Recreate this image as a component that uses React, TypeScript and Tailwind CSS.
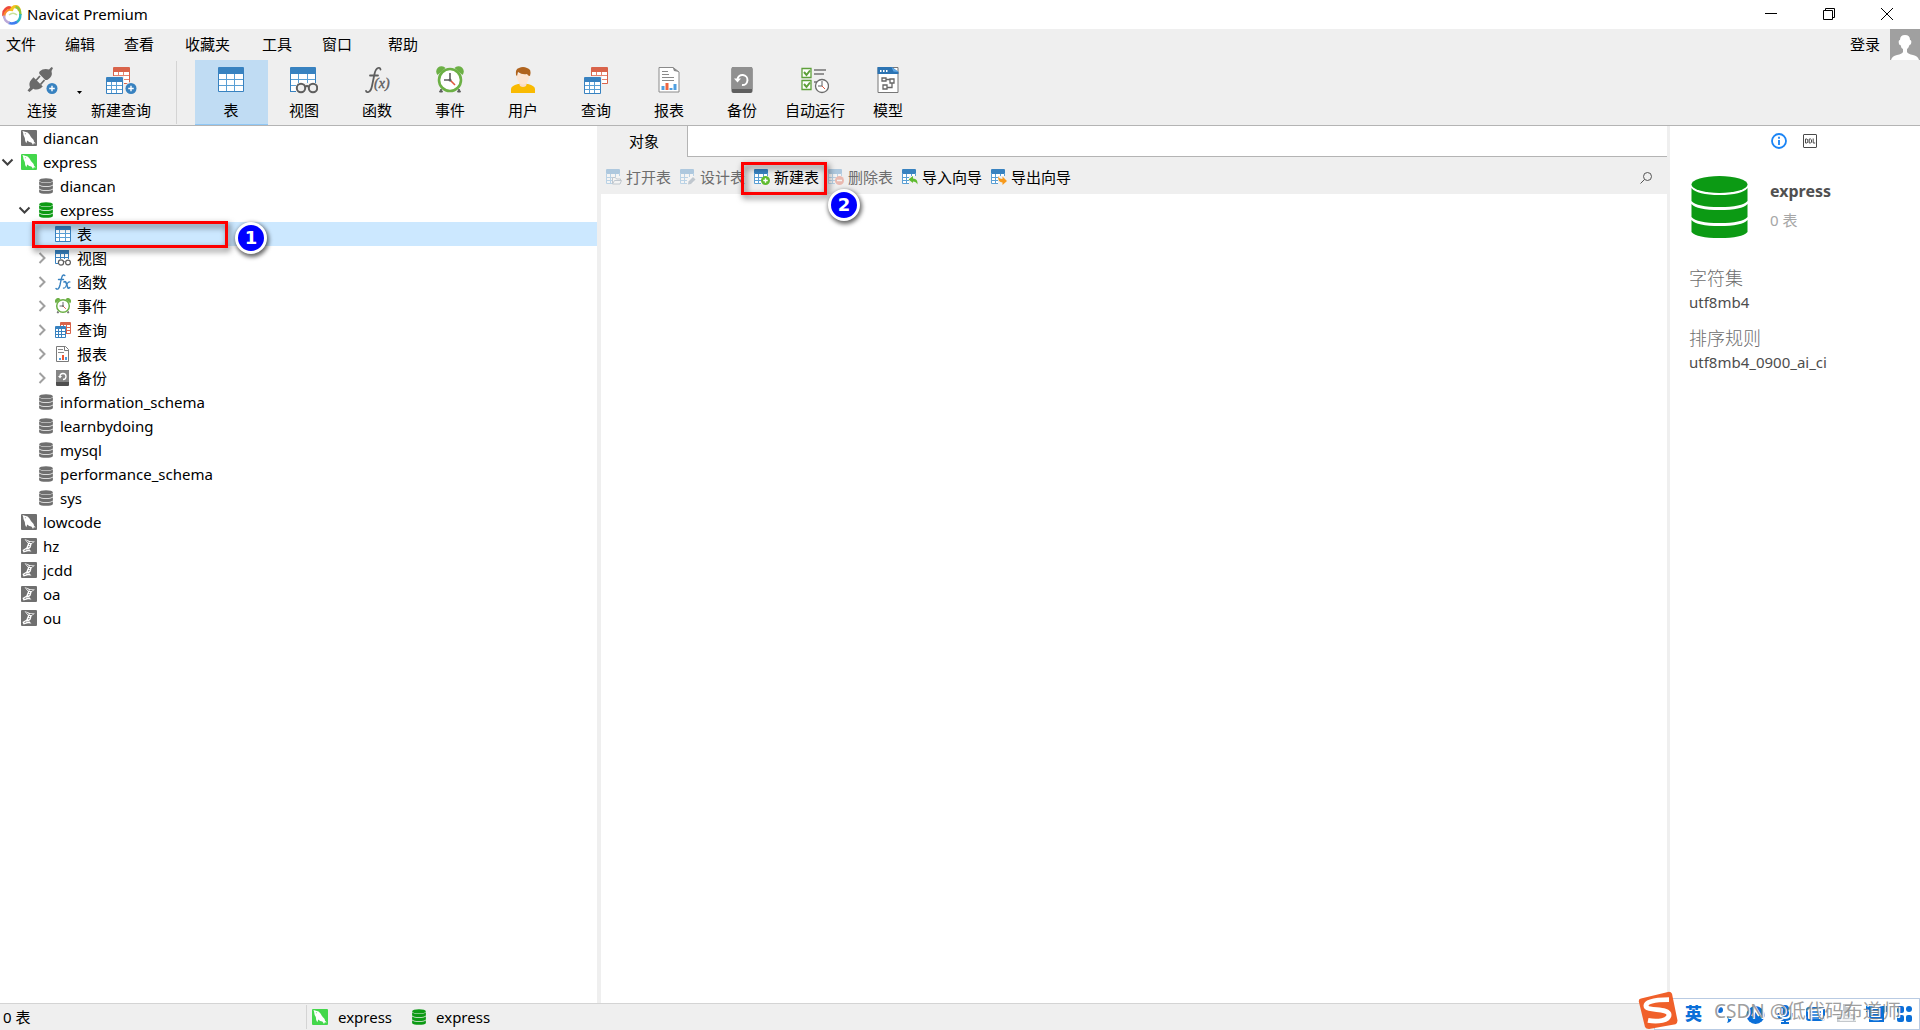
import React from "react";

type IconProps = { className?: string };

const GRAY = "#6f6f6f";

/* ---------- icons: grids ---------- */

function Grid({ x, y, w, h, head, body }: { x: number; y: number; w: number; h: number; head: string; body: string }) {
    const headH = Math.round(h * 0.27);
    const top = y + headH;
    const rows = [1, 2].map((n) => top + Math.round(((h - headH) * n) / 3) - 0.5);
    const cols = [1, 2].map((n) => x + Math.round((w * n) / 3) - 0.5);
    return (
        <g>
            <rect x={x} y={y} width={w} height={h} rx="1" fill={head} />
            <rect x={x + 1} y={top} width={w - 2} height={h - headH - 1} fill="#fff" />
            <path
                d={`M${x + 1} ${rows[0]}h${w - 2}M${x + 1} ${rows[1]}h${w - 2}M${cols[0]} ${top}v${h - headH - 1}M${cols[1]} ${top}v${h - headH - 1}`}
                stroke={body}
                strokeWidth="1"
                fill="none"
            />
        </g>
    );
}

function PlusDot({ cx, cy, r, color }: { cx: number; cy: number; r: number; color: string }) {
    return (
        <g>
            <circle cx={cx} cy={cy} r={r} fill={color} />
            <path d={`M${cx - r * 0.5} ${cy}h${r}M${cx} ${cy - r * 0.5}v${r}`} stroke="#fff" strokeWidth="1.4" />
        </g>
    );
}

function TableIcon({ className }: IconProps) {
    return (
        <svg className={className} viewBox="0 0 28 28" aria-hidden="true">
            <Grid x={1} y={1} w={26} h={25} head="#3882c0" body="#5a9fd4" />
        </svg>
    );
}

function ViewIcon({ className }: IconProps) {
    return (
        <svg className={className} viewBox="0 0 28 28" aria-hidden="true">
            <path d="M0 2a1 1 0 0 1 1-1h24a1 1 0 0 1 1 1v15h-1V8H1v17h5v1H0z" fill="#3882c0" />
            <path d="M1 8h24v9H7v8H1z" fill="#fff" />
            <path d="M1 13.500h24M1 19.500h5M8.500 8v9M17.500 8v9" stroke="#5a9fd4" fill="none" />
            <circle cx="11" cy="22" r="4.200" fill="#efefef" stroke="#5e5e5e" strokeWidth="2" />
            <circle cx="23" cy="22" r="4.200" fill="#efefef" stroke="#5e5e5e" strokeWidth="2" />
            <path d="M15 21q2-2 4 0" stroke="#5e5e5e" strokeWidth="2" fill="none" />
        </svg>
    );
}

function QueryIcon({ className, plus }: IconProps & { plus?: boolean }) {
    return (
        <svg className={className} viewBox={plus ? "0 0 32 28" : "0 0 26 28"} aria-hidden="true">
            <Grid x={8} y={1} w={17} h={17} head="#d9634a" body="#e58570" />
            <rect x="0" y="10" width="19" height="18" fill="#efefef" />
            <Grid x={1} y={11} w={17} h={17} head="#3882c0" body="#5a9fd4" />
            {plus && <circle cx="26" cy="22.500" r="6.500" fill="#efefef" />}
            {plus && <PlusDot cx={26} cy={22.5} r={5.500} color="#3882c0" />}
        </svg>
    );
}

/* ---------- icons: toolbar ---------- */

function PlugIcon({ className }: IconProps) {
    return (
        <svg className={className} viewBox="0 0 32 28" aria-hidden="true">
            <g fill="#6a6a6a">
                <path d="M25.500 1l1.500 1-1.500 3q1.500 5.500-3.500 8.500-2 1-3.200 0L13.500 8q-1-1.200.3-2.800Q17.500 2 23 3.500z" />
                <path d="M5.500 13.500l2-2.300 9.300 9.300-2.500 2q-3.800 2-7 .2L3.500 26 1.500 24.500 4 21.500q-1.800-4.500 1.500-8z" />
            </g>
            <path d="M10 14.500l4-4.500M14.500 18.500l4-4.500" stroke="#6a6a6a" strokeWidth="1.800" />
            <circle cx="26" cy="22.500" r="6.500" fill="#efefef" />
            <PlusDot cx={26} cy={22.5} r={5.500} color="#3882c0" />
        </svg>
    );
}

function FnIcon({ className }: IconProps) {
    return (
        <svg className={className} viewBox="0 0 28 28" overflow="visible" aria-hidden="true">
            <path
                d="M17.500 3.500Q17 1.300 15 2q-2.500 1-3.500 6L9 20q-1 5-3.500 6-2 .7-2.500-1.200M7 9.500h8"
                fill="none"
                stroke="#5e5e5e"
                strokeWidth="1.800"
                strokeLinecap="round"
            />
            <text x="11" y="22" fontFamily="Liberation Serif, serif" fontStyle="italic" fontSize="14" fill="#5e5e5e" stroke="#5e5e5e" strokeWidth="0.4">(x)</text>
        </svg>
    );
}

function SmallFnIcon({ className }: IconProps) {
    return (
        <svg className={className} viewBox="0 0 16 16" aria-hidden="true">
            <g fill="none" stroke="#3882c0" strokeLinecap="round">
                <path d="M9.800 1.500Q8.500.2 7.300 2 6.500 3.500 5 11q-.8 3.500-2 4-1.200.4-2-.5M3.500 5.500h5" strokeWidth="1.400" />
                <path d="M9 8q1.500-1 2.200 1l1.300 4q.6 2 2.300.5" strokeWidth="1.600" />
                <path d="M15 8q-1.500-.8-3 2L10.500 13q-1 1.500-2.200 1" strokeWidth="1.100" />
            </g>
        </svg>
    );
}

function ClockIcon({ className }: IconProps) {
    return (
        <svg className={className} viewBox="0 0 28 28" aria-hidden="true">
            <path d="M1.500 9a5 5 0 0 1 8-7zM26.500 9a5 5 0 0 0-8-7z" fill="#6cb045" />
            <path d="M5 23l-1.500 3h3zM23 23l1.500 3h-3z" fill="#5e5e5e" stroke="#5e5e5e" />
            <circle cx="14" cy="14" r="11" fill="#fff" stroke="#6cb045" strokeWidth="2.600" />
            <path d="M14 7v7H8" stroke="#5e5e5e" strokeWidth="1.600" fill="none" />
            <path d="M14 14l5 5" stroke="#e0563c" strokeWidth="1.600" />
            <circle cx="14" cy="14" r="1.500" fill="#5e5e5e" />
        </svg>
    );
}

function UserIcon({ className }: IconProps) {
    return (
        <svg className={className} viewBox="0 0 26 28" aria-hidden="true">
            <path d="M1 27v-4q0-3 7-5h10q7 2 7 5v4z" fill="#f9ba02" />
            <path d="M9 17h8l-1 3q-3 2-6 0z" fill="#f9dcc4" />
            <path d="M6.500 8h13q0 6-3 9-3.500 3-7 0-3-3-3-9z" fill="#fde5d2" />
            <path d="M6 9Q5 3 9 2q4-2 8 0 5 1 3 8-2 0-3-2-5 1-9-2l-1 4z" fill="#b0641e" />
        </svg>
    );
}

function ReportIcon({ className }: IconProps) {
    return (
        <svg className={className} viewBox="0 0 22 28" aria-hidden="true">
            <path d="M1 1.500h14l6 4.500v20H1z" fill="#fff" stroke="#8a8a8a" />
            <path d="M14.500 1l6.500 5-5-1z" fill="#8a8a8a" />
            <path d="M4 5.500h6M4 8.500h7M4 11.500h12M4 14.500h12" stroke="#8a8a8a" />
            <path d="M3.500 20h3v4h-3zM15.500 18h3v6h-3z" fill="#4f9fe0" />
            <path d="M11.500 22h3v2h-3z" fill="#4f9fe0" />
            <path d="M7.500 17h3v7h-3z" fill="#ee6540" />
        </svg>
    );
}

function BackupIcon({ className }: IconProps) {
    return (
        <svg className={className} viewBox="0 0 22 28" aria-hidden="true">
            <rect x="0.500" y="1" width="21" height="26" rx="2" fill="#5f5f5f" />
            <path d="M2.500 1h17a2 2 0 0 1 2 2v20H.5V3a2 2 0 0 1 2-2z" fill="#909090" />
            <path d="M6.500 13.500a5 5 0 1 1 4.500 5.500" stroke="#fff" strokeWidth="2" fill="none" />
            <path d="M3 12.500h7l-3.500 4z" fill="#fff" />
        </svg>
    );
}

function AutoIcon({ className }: IconProps) {
    return (
        <svg className={className} viewBox="0 0 28 28" aria-hidden="true">
            <path d="M1 2.500h9v9H1zM1 14.500h9v9H1z" fill="#fff" stroke="#5ea03a" strokeWidth="1.300" />
            <path d="M3 6l2.500 3L9 4.500M3 18l2.500 3L9 16.500" stroke="#5ea03a" strokeWidth="2" fill="none" />
            <path d="M13 4h12M13 8h10M13 16h3" stroke="#929292" strokeWidth="2" />
            <circle cx="21" cy="20" r="6.500" fill="#fff" stroke="#6a6a6a" strokeWidth="1.300" />
            <path d="M21 15v5h-4" stroke="#5e5e5e" fill="none" />
            <path d="M21 20l3 3" stroke="#e0563c" />
        </svg>
    );
}

function ModelIcon({ className }: IconProps) {
    return (
        <svg className={className} viewBox="0 0 22 28" aria-hidden="true">
            <path d="M1 1.500h20v25H1z" fill="#fff" stroke="#777" />
            <path d="M.5 1H15l6.500 5v2H.5z" fill="#2c74b3" />
            <path d="M14.500 1l7 5-5-.5z" fill="#5fa8e6" />
            <path d="M3 5h1.500M6 5h1.500M9 5h1.500" stroke="#fff" strokeWidth="2" />
            <path d="M5 12h4v3H5zM13 13h4v4h-4zM6 19h4v4H6zM9 13.500h4M15 17v4.500h-5" fill="none" stroke="#666" strokeWidth="1.300" />
        </svg>
    );
}

/* ---------- icons: tree ---------- */

function SmallTableIcon({ className }: IconProps) {
    return (
        <svg className={className} viewBox="0 0 16 16" aria-hidden="true">
            <Grid x={0} y={0} w={16} h={16} head="#3882c0" body="#5a9fd4" />
        </svg>
    );
}

function SmallViewIcon({ className }: IconProps) {
    return (
        <svg className={className} viewBox="0 0 16 16" aria-hidden="true">
            <path d="M0 0h14v9H3v5H0z" fill="#fff" />
            <path d="M0 0h14v4H0z" fill="#3882c0" />
            <path d="M.5 4v9.500H3M13.500 4v5M5.500 4v5M9.500 4v5M0 7.500h14" stroke="#3882c0" fill="none" />
            <circle cx="6" cy="12.500" r="2.600" fill="#fff" stroke="#5e5e5e" strokeWidth="1.200" />
            <circle cx="13" cy="12.500" r="2.400" fill="#fff" stroke="#5e5e5e" strokeWidth="1.200" />
            <path d="M8.500 12q1-.8 2 0" stroke="#5e5e5e" fill="none" />
        </svg>
    );
}

function SmallQueryIcon({ className }: IconProps) {
    return (
        <svg className={className} viewBox="0 0 16 16" aria-hidden="true">
            <Grid x={5} y={0} w={11} h={12} head="#d9634a" body="#d9634a" />
            <Grid x={0} y={4} w={11} h={12} head="#3882c0" body="#3882c0" />
        </svg>
    );
}

function SmallReportIcon({ className }: IconProps) {
    return (
        <svg className={className} viewBox="0 0 16 16" aria-hidden="true">
            <path d="M1.500.5h9l3 3v12h-12z" fill="#fff" stroke="#7a7a7a" />
            <path d="M9.500 1v3.500h4" fill="none" stroke="#7a7a7a" />
            <path d="M3 3.500h5M3 6.500h6" stroke="#8a8a8a" />
            <path d="M4 12h2v2H4zM10 11h2v3h-2z" fill="#4f9fe0" />
            <path d="M7 9h2v5H7z" fill="#ee5530" />
        </svg>
    );
}

function SmallBackupIcon({ className }: IconProps) {
    return (
        <svg className={className} viewBox="0 0 16 16" aria-hidden="true">
            <rect x="1" y="0" width="13" height="16" rx="1" fill="#4f4f4f" />
            <path d="M2 0h11a1 1 0 0 1 1 1v11H1V1a1 1 0 0 1 1-1z" fill="#858585" />
            <path d="M5 6.500a3 3 0 1 1 3 3" stroke="#fff" strokeWidth="1.300" fill="none" />
            <path d="M3 6h4L5 8.500z" fill="#fff" />
        </svg>
    );
}

function Dolphin({ className, color = GRAY }: IconProps & { color?: string }) {
    return (
        <svg className={className} viewBox="0 0 16 16" aria-hidden="true">
            <rect width="16" height="16" rx="1" fill={color} />
            <path
                d="M1.500 1L4 1.700Q7 1.800 8.500 4.500q1.500 3 3 4.300 1.500 1.200 1.500 3l1.800 1.700-2-.2-.8 1.700Q11.500 13.500 10.300 12.500 8 12.300 6.300 10.500l-1 2.700Q3.800 11 3.800 8 2 5 2.200 3z"
                fill="#fff"
            />
            <circle cx="4.300" cy="3.700" r="0.500" fill={color} />
        </svg>
    );
}

function SqlServer({ className }: IconProps) {
    return (
        <svg className={className} viewBox="0 0 16 16" aria-hidden="true">
            <rect width="16" height="16" rx="1" fill={GRAY} />
            <path d="M3.500 1.200l3 .8 2.500 1.200 5 .3-3.300 2.300-1 3.700L8 11l2.500 2.500L7 13.200 2.500 14.500 1.500 12l3.800-2.200L7 5.500z" fill="#fff" />
            <path d="M5.500 2.500L8 4.500M8.500 4.500h3M8 7l1-.8M7 9l1.500-.5M3.500 12.500l2-.8M6.500 11l1 1" stroke={GRAY} fill="none" />
        </svg>
    );
}

function Database({ className, color = GRAY }: IconProps & { color?: string }) {
    return (
        <svg className={className} viewBox="0 0 58 64" preserveAspectRatio="none" aria-hidden="true">
            <g fill={color}>
                <ellipse cx="29" cy="9.500" rx="28.500" ry="8.500" />
                <path d="M.5 13Q6 20 29 20t28.500-7v13Q52 32 29 32T.5 26z" />
                <path d="M.5 29Q6 35 29 35t28.500-6v13Q52 48 29 48T.5 42z" />
                <path d="M.5 45Q6 51 29 51t28.500-6v12Q52 63 29 63T.5 57z" />
            </g>
        </svg>
    );
}

function Chevron({ open }: { open: boolean }) {
    return open ? (
        <svg className="size-4" viewBox="0 0 16 16" aria-hidden="true">
            <path d="M2.500 5.500l5 5 5-5" fill="none" stroke="#404040" strokeWidth="2" />
        </svg>
    ) : (
        <svg className="size-4" viewBox="0 0 16 16" aria-hidden="true">
            <path d="M5.500 3l5 5-5 5" fill="none" stroke="#a0a0a0" strokeWidth="2" />
        </svg>
    );
}

/* ---------- icons: object toolbar ---------- */

function ObjectIcon({ kind }: { kind: string }) {
    return (
        <svg className="size-4 shrink-0" viewBox="0 0 16 16" aria-hidden="true">
            <rect width="14" height="14" rx="1" y="0.500" fill="#fff" />
            <path d="M0 1a1 1 0 0 1 1-1h12a1 1 0 0 1 1 1v4H0z" fill="#3882c0" />
            <path d="M.5 4v10.500H7M13.500 4v3M4.500 5v9.500M9.500 5v3M0 8.500h8M0 11.500h7" stroke="#5a9fd4" fill="none" />
            {kind === "open" && <path d="M6.500 15V8.500h3l1 1.500h4v1.500M6.500 15l2-3.500h7L14 15z" fill="#fff" stroke="#6a7f92" />}
            {kind === "design" && <path d="M8 15.500l.5-3L13 8l2.500 2.500L11 15z" fill="#6a7f92" />}
            {kind === "new" && <PlusDot cx={11.5} cy={11.5} r={4.500} color="#5fbb2f" />}
            {kind === "delete" && (
                <>
                    <circle cx="11.500" cy="11.500" r="4.500" fill="#e0563c" />
                    <path d="M9 11.500h5" stroke="#fff" strokeWidth="1.500" />
                </>
            )}
            {kind === "import" && (
                <>
                    <path d="M7 7h9v9H7z" fill="#efefef" />
                    <path d="M6.500 10.500L11 7v2.500q5 0 4.500 6-1.500-3-4.500-3V14z" fill="#5fbb2f" />
                </>
            )}
            {kind === "export" && (
                <>
                    <path d="M7 7h9v9H7z" fill="#efefef" />
                    <path d="M7 7q1 3 4.500 3V7.500L16 12l-4.500 4v-2.500Q7 13.500 7 7z" fill="#f79a1c" />
                </>
            )}
        </svg>
    );
}

/* ---------- data ---------- */

const menus = ["文件", "编辑", "查看", "收藏夹", "工具", "窗口", "帮助"];

const tools = [
    { label: "表", icon: <TableIcon className="size-7" />, active: true },
    { label: "视图", icon: <ViewIcon className="size-7" /> },
    { label: "函数", icon: <FnIcon className="size-7" /> },
    { label: "事件", icon: <ClockIcon className="size-7" /> },
    { label: "用户", icon: <UserIcon className="h-7 w-[26px]" /> },
    { label: "查询", icon: <QueryIcon className="h-7 w-[26px]" /> },
    { label: "报表", icon: <ReportIcon className="h-7 w-[22px]" /> },
    { label: "备份", icon: <BackupIcon className="h-7 w-[22px]" /> },
    { label: "自动运行", icon: <AutoIcon className="size-7" /> },
    { label: "模型", icon: <ModelIcon className="h-7 w-[22px]" /> },
];

interface TreeNode {
    label: string;
    level: 0 | 1 | 2;
    icon: React.ReactNode;
    open?: boolean;
    selected?: boolean;
}

const db = <Database className="h-4 w-3.5" />;

const tree: TreeNode[] = [
    { label: "diancan", level: 0, icon: <Dolphin className="size-4" /> },
    { label: "express", level: 0, icon: <Dolphin className="size-4" color="#43d74b" />, open: true },
    { label: "diancan", level: 1, icon: db },
    { label: "express", level: 1, icon: <Database className="h-4 w-3.5" color="#0c9a14" />, open: true },
    { label: "表", level: 2, icon: <SmallTableIcon className="size-4" />, selected: true },
    { label: "视图", level: 2, icon: <SmallViewIcon className="size-4" />, open: false },
    { label: "函数", level: 2, icon: <SmallFnIcon className="size-4" />, open: false },
    { label: "事件", level: 2, icon: <ClockIcon className="size-4" />, open: false },
    { label: "查询", level: 2, icon: <SmallQueryIcon className="size-4" />, open: false },
    { label: "报表", level: 2, icon: <SmallReportIcon className="size-4" />, open: false },
    { label: "备份", level: 2, icon: <SmallBackupIcon className="size-4" />, open: false },
    { label: "information_schema", level: 1, icon: db },
    { label: "learnbydoing", level: 1, icon: db },
    { label: "mysql", level: 1, icon: db },
    { label: "performance_schema", level: 1, icon: db },
    { label: "sys", level: 1, icon: db },
    { label: "lowcode", level: 0, icon: <Dolphin className="size-4" /> },
    { label: "hz", level: 0, icon: <SqlServer className="size-4" /> },
    { label: "jcdd", level: 0, icon: <SqlServer className="size-4" /> },
    { label: "oa", level: 0, icon: <SqlServer className="size-4" /> },
    { label: "ou", level: 0, icon: <SqlServer className="size-4" /> },
];

const indent = ["pl-0", "pl-[17px]", "pl-[34px]"];

const objectActions = [
    { label: "打开表", kind: "open", disabled: true },
    { label: "设计表", kind: "design", disabled: true },
    { label: "新建表", kind: "new" },
    { label: "删除表", kind: "delete", disabled: true },
    { label: "导入向导", kind: "import" },
    { label: "导出向导", kind: "export" },
];

/* ---------- pieces ---------- */

function Frame({ className }: { className: string }) {
    return (
        <span
            className={`pointer-events-none absolute z-10 border-3 border-[#fe0000] drop-shadow-[2px_3px_3px_rgba(0,0,0,0.6)] ${className}`}
        />
    );
}

function StepBadge({ n, className }: { n: number; className: string }) {
    return (
        <span
            className={`pointer-events-none absolute z-20 flex size-8 items-center justify-center rounded-full border-3 border-white bg-[#0000fe] font-['DejaVu_Sans',sans-serif] text-lg font-bold text-white shadow-[1px_2px_4px_1px_rgba(0,0,0,0.6)] ${className}`}
        >
            {n}
        </span>
    );
}

function TitleBar() {
    return (
        <header className="flex h-[29px] items-center bg-white pr-1 pl-0.5">
            <svg className="size-5" viewBox="0 0 20 20" fill="none" strokeWidth="3" aria-hidden="true">
                <path d="M1.800 11Q1 6.500 4 4q3-3 6 0" stroke="#ee4a3a" />
                <path d="M2 13q0-6 4.500-8 3-1 4.500.5" stroke="#f98b2b" strokeWidth="2" />
                <path d="M9 6q1-4.500 5-4.500 3 .5 3.500 4.500" stroke="#f4c21c" />
                <path d="M13.500 2q5 1 5 8" stroke="#8cc63e" strokeWidth="2.400" />
                <path d="M18.300 9q.5 6-4.300 8.500" stroke="#2fb5c0" strokeWidth="2.400" />
                <path d="M15 17q-4.500 2.500-8.500.8" stroke="#3f7df0" strokeWidth="2.600" />
                <path d="M7.500 18Q2 16 2 10.500" stroke="#b9a8d8" strokeWidth="2.400" />
                <path d="M7 10q4-3.500 8 0" stroke="#c9e29a" strokeWidth="1.500" />
            </svg>
            <h1 className="ml-[5px] pb-px text-[15px] leading-5">Navicat Premium</h1>
            <div className="ml-auto flex pb-0.5">
                <button className="flex h-[27px] w-[58px] items-center justify-center" aria-label="最小化">
                    <svg className="size-3" viewBox="0 0 12 12"><path d="M0 5.500h12" stroke="#000" /></svg>
                </button>
                <button className="flex h-[27px] w-[58px] items-center justify-center" aria-label="还原">
                    <svg className="size-3" viewBox="0 0 12 12"><path d="M.5 2.500h9v9h-9zM2.500 2.500v-2h9v9h-2" stroke="#000" fill="none" /></svg>
                </button>
                <button className="flex h-[27px] w-[58px] items-center justify-center" aria-label="关闭">
                    <svg className="size-3" viewBox="0 0 12 12"><path d="M0 0l12 12M12 0L0 12" stroke="#000" /></svg>
                </button>
            </div>
        </header>
    );
}

function MenuBar() {
    return (
        <div className="flex h-[31px] items-center">
            <nav className="grid grid-cols-[59px_59px_61px_77px_60px_66px_60px] pb-0.5 pl-1.5">
                {menus.map((m) => (
                    <button key={m} className="text-left leading-5">{m}</button>
                ))}
            </nav>
            <button className="mr-2.5 ml-auto pb-0.5 leading-5">登录</button>
            <svg className="h-[31px] w-[30px]" viewBox="0 0 30 31" aria-hidden="true">
                <rect width="30" height="31" fill="#a0a0a0" />
                <path d="M10 11q0-5 5-5t5 5q2 0 1 4-1 1-1.500 1-1 3-2.500 4v3q1 2 6 3 5 1 6 5H1q1-4 6-5 5-1 6-3v-3q-2-1-2.500-4Q9 16 9 15q-1-4 1-4z" fill="#fff" />
            </svg>
        </div>
    );
}

function ToolBar() {
    return (
        <div className="flex h-[65px]">
            <button className="flex w-[73px] flex-col items-center gap-1.5 pt-1.5 pl-[11px]">
                <PlugIcon className="h-7 w-8" />
                <span className="leading-5">连接</span>
            </button>
            <button className="flex w-3 justify-center pt-[31px]" aria-label="连接类型">
                <svg className="h-[3px] w-[5px]" viewBox="0 0 5 3"><path d="M0 0h5L2.500 3z" /></svg>
            </button>
            <button className="flex w-[73px] flex-col items-center gap-1.5 pt-1.5 pr-px">
                <QueryIcon className="h-7 w-8" plus />
                <span className="leading-5">新建查询</span>
            </button>
            <div className="mx-[18px] my-px w-px bg-[#d4d4d4]" />
            {tools.map((t) => (
                <button
                    key={t.label}
                    className={
                        t.active
                            ? "flex w-[73px] flex-col items-center gap-1.5 border-b border-[#90c8f6] bg-[#c0dcf3] pt-1.5 pr-px"
                            : "flex w-[73px] flex-col items-center gap-1.5 pt-1.5 pr-px"
                    }
                >
                    {t.icon}
                    <span className="leading-5">{t.label}</span>
                </button>
            ))}
        </div>
    );
}

function Sidebar() {
    return (
        <aside className="w-[597px] shrink-0 bg-white">
            <ul>
                {tree.map((node, i) => (
                    <li key={i} className={node.selected ? "relative bg-[#cce8ff]" : ""}>
                        <button className={`flex h-6 w-full items-center text-left ${indent[node.level]}`}>
                            <span className="size-4">{node.open !== undefined && <Chevron open={node.open} />}</span>
                            <span className="ml-[5px] flex w-4 justify-center">{node.icon}</span>
                            <span className="ml-1.5 leading-5">{node.label}</span>
                        </button>
                        {node.selected && (
                            <>
                                <Frame className="-top-px left-8 h-[27px] w-[196px]" />
                                <StepBadge n={1} className="top-0 left-[235px]" />
                            </>
                        )}
                    </li>
                ))}
            </ul>
        </aside>
    );
}

function ObjectPane() {
    return (
        <main className="flex min-w-0 flex-1 flex-col bg-[#efefef]">
            <div className="flex h-[31px]">
                <button className="w-[90px] pb-0.5 pl-1 leading-5">对象</button>
                <div className="flex-1 border-b border-l border-[#b4b4b4] bg-white" />
            </div>
            <div className="flex h-[37px] items-center gap-[9px] pt-0.5 pl-[9px]">
                {objectActions.map((a) => (
                    <div key={a.kind} className="relative">
                        <button
                            disabled={a.disabled}
                            className={a.disabled ? "flex items-center gap-1 text-[#6d6d6d]" : "flex items-center gap-1"}
                        >
                            <span className={a.disabled ? "opacity-35" : ""}><ObjectIcon kind={a.kind} /></span>
                            <span className="leading-5">{a.label}</span>
                        </button>
                        {a.kind === "new" && (
                            <>
                                <Frame className="-top-[5px] -left-[13px] h-[33px] w-[86px]" />
                                <StepBadge n={2} className="top-[22px] left-[74px]" />
                            </>
                        )}
                    </div>
                ))}
                <button className="mr-[15px] ml-auto pt-0.5" aria-label="搜索">
                    <svg className="size-3" viewBox="0 0 12 12"><circle cx="7.500" cy="4.500" r="4" fill="none" stroke="#555" /><path d="M4.500 7.500L.5 11.500" stroke="#555" /></svg>
                </button>
            </div>
            <div className="ml-1 flex-1 bg-white" />
        </main>
    );
}

function InfoPane() {
    return (
        <aside className="w-[253px] shrink-0 border-l-3 border-[#efefef] bg-white pl-[19px]">
            <div className="flex h-[30px] items-center gap-4 pl-[82px]">
                <button aria-label="信息">
                    <svg className="size-4" viewBox="0 0 16 16"><circle cx="8" cy="8" r="7" fill="none" stroke="#1a84f5" strokeWidth="1.800" /><path d="M8 7v5M8 3.800v2" stroke="#1a84f5" strokeWidth="1.800" /></svg>
                </button>
                <button aria-label="DDL">
                    <svg className="size-3.5" viewBox="0 0 14 14" fill="none" stroke="#4a4a4a">
                        <rect x="0.500" y="0.500" width="13" height="13" rx="0.500" />
                        <path d="M2.500 5v4h1.500l.8-.8V5.800L4 5zM6.200 5v4h1.500l.8-.8V5.800L7.700 5zM10.200 4.500V9h2" />
                    </svg>
                </button>
            </div>
            <div className="mt-[19px] flex gap-[22px] pl-0.5">
                <Database className="h-16 w-[57px]" color="#0c9a14" />
                <div className="pt-1.5">
                    <h2 className="text-base leading-5 font-bold text-[#505050]">express</h2>
                    <p className="mt-[9px] leading-5 text-[#a6a6a6]">0 表</p>
                </div>
            </div>
            <dl className="mt-[27px] text-[#4d4d4d]">
                <dt className="text-lg leading-6 font-light text-[#6d6d6d]">字符集</dt>
                <dd className="mt-0.5 mb-3.5 leading-5">utf8mb4</dd>
                <dt className="text-lg leading-6 font-light text-[#6d6d6d]">排序规则</dt>
                <dd className="mt-0.5 leading-5">utf8mb4_0900_ai_ci</dd>
            </dl>
        </aside>
    );
}

function InputMethodBar() {
    return (
        <div className="absolute right-0 bottom-0 flex h-8 w-[266px] items-center border border-[#b9cbe3] bg-white">
            <svg className="absolute bottom-0 -left-[17px] h-[38px] w-10" viewBox="0 0 40 40" preserveAspectRatio="none" aria-hidden="true">
                <path d="M3 8L30 1q3-.5 4 2L39.500 31q0 3-2 4L11 40q-3 0-4-2L.8 11Q.5 8.500 3 8z" fill="#f0602a" />
                <path d="M31 9Q8 9 8 15.500C8 22 31 17 31 25c0 6-11 8-21 6" fill="none" stroke="#fff" strokeWidth="5" />
            </svg>
            <span className="ml-[30px] text-[17px] leading-5 font-black text-[#0a6fd8]">英</span>
            <svg className="ml-3.5 h-5 w-[196px]" viewBox="0 0 196 20" fill="#0a6fd8" aria-hidden="true">
                <circle cx="4" cy="6" r="3" />
                <path d="M11 13h5q0 5-5 6 2-3 0-6z" />
                <circle cx="39.500" cy="11" r="9" />
                <path d="M36 12q3.500-5 3.500-8 0 3 3.500 8" stroke="#fff" strokeWidth="2" fill="none" />
                <rect x="65" y="1" width="8" height="12" rx="4" />
                <path d="M62 9q0 7 7 7t7-7M69 16v4M65 19h8" stroke="#0a6fd8" strokeWidth="2" fill="none" />
                <rect x="91" y="4" width="17" height="12" rx="2" fill="#fff" stroke="#0a6fd8" strokeWidth="2" />
                <path d="M94 8h11M94 11h11M96 14h7" stroke="#0a6fd8" strokeWidth="1.500" />
                <path d="M127 0h8v10h-8zM121 10h19v8h-19z" fill="#c4c8cc" />
                <path d="M124 13h3M129 13h3M134 13h3M124 16h13" stroke="#fff" strokeWidth="1.500" />
                <path d="M150 2h6q4.500 3 9 0h6v6h-3v10h-15V8h-3z" />
                <rect x="181" y="2" width="7" height="7" rx="2" />
                <circle cx="193" cy="5" r="3" />
                <rect x="181" y="11" width="7" height="7" rx="2" />
                <rect x="190" y="11" width="6" height="7" rx="2" />
            </svg>
            <span className="absolute top-0 left-[59px] text-[19px] leading-6 whitespace-nowrap text-[#858585]/80 [text-shadow:1px_1px_0_#fff]">
                CSDN @低代码布道师
            </span>
        </div>
    );
}

function StatusBar() {
    return (
        <footer className="relative flex h-[27px] items-center border-t border-[#d4d4d4] bg-[#efefef]">
            <span className="w-[306px] pl-[3px] leading-5">0 表</span>
            <span className="h-6 w-px bg-[#d4d4d4]" />
            <Dolphin className="ml-[5px] size-4" color="#43d74b" />
            <span className="ml-2.5 leading-5">express</span>
            <Database className="ml-5 h-4 w-3.5" color="#0c9a14" />
            <span className="ml-2.5 leading-5">express</span>
            <InputMethodBar />
        </footer>
    );
}

export default function App() {
    return (
        <div
            lang="zh-CN"
            className="flex min-h-screen flex-col bg-[#efefef] font-['Noto_Sans','Noto_Sans_CJK_SC',sans-serif] text-[15px] text-black"
        >
            <TitleBar />
            <MenuBar />
            <ToolBar />
            <div className="flex flex-1 border-t border-[#b4b4b4]">
                <Sidebar />
                <ObjectPane />
                <InfoPane />
            </div>
            <StatusBar />
        </div>
    );
}
